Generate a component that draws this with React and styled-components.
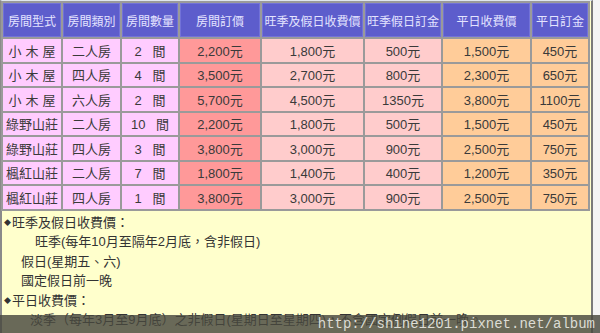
import React from "react";
import styled, { createGlobalStyle } from "styled-components";

const Global = createGlobalStyle`
  html, body { margin: 0; padding: 0; background: #fff; }
  body { font-family: "Liberation Sans", "Noto Sans CJK TC", sans-serif; }
`;

const Stage = styled.div`
  position: relative;
  width: 600px;
  height: 333px;
  overflow: hidden;
  background: #f4f4f4;
`;

const Frame = styled.div`
  width: 589px;
  height: 340px;
  background: #ffffcc;
  border-left: 2px solid #8a8a8a;
  border-right: 2px solid #7a7a7a;
  padding-top: 2px;
  border-top: 1px solid #dfe6ee;
`;

const Table = styled.table`
  width: 589px;
  border-collapse: separate;
  border-spacing: 2px;
  background: #9a9a9a;
  margin-left: -1px;
  margin-top: -2px;
  table-layout: fixed;
`;

const Head = styled.th`
  background: #5d5dcc;
  color: #e4e4ff;
  font-weight: normal;
  font-size: 12px;
  height: 34px;
  padding: 0;
  text-align: center;
  white-space: nowrap;
  overflow: hidden;
  box-shadow: inset 0 0 0 1px #7272d8;
`;

const tones = {
  pink: "#ffccff",
  salmon: "#ff9999",
  rose: "#ffcccc",
  peach: "#ffcc99",
};

const Cell = styled.td`
  background: ${(p) => tones[p.$tone]};
  color: #3a3a3a;
  font-size: 13px;
  height: 22.5px;
  padding: 0;
  text-align: center;
  white-space: nowrap;
  letter-spacing: ${(p) => (p.$spaced ? "4px" : "0")};
  text-indent: ${(p) => (p.$spaced ? "4px" : "0")};
  word-spacing: ${(p) => (p.$wide ? "7px" : "0")};
`;

const Notes = styled.div`
  padding: 2px 0 0 2px;
  color: #333;
  font-size: 13px;
  line-height: 19.5px;
`;

const Line = styled.div`
  padding-left: ${(p) => p.$indent || 0}px;
  white-space: nowrap;
`;

const Bullet = styled.span`
  font-size: 7px;
  vertical-align: 2px;
  margin-right: 1px;
`;

const Watermark = styled.div`
  position: absolute;
  left: 0;
  right: 0;
  bottom: 0;
  height: 18px;
  background: rgba(72, 72, 62, 0.82);
  display: flex;
  align-items: center;
  justify-content: flex-end;
  padding-right: 5px;
`;

const WatermarkText = styled.span`
  font-family: "Liberation Mono", monospace;
  font-size: 14px;
  color: #dcdcd4;
`;

const widths = [58, 57, 56, 80, 101, 76, 87, 56];
const headers = [
  "房間型式",
  "房間類別",
  "房間數量",
  "房間訂價",
  "旺季及假日收費價",
  "旺季假日訂金",
  "平日收費價",
  "平日訂金",
];

const rows = [
  ["小木屋", "二人房", "2 間", "2,200元", "1,800元", "500元", "1,500元", "450元"],
  ["小木屋", "四人房", "4 間", "3,500元", "2,700元", "800元", "2,300元", "650元"],
  ["小木屋", "六人房", "2 間", "5,700元", "4,500元", "1350元", "3,800元", "1100元"],
  ["綠野山莊", "二人房", "10 間", "2,200元", "1,800元", "500元", "1,500元", "450元"],
  ["綠野山莊", "四人房", "3 間", "3,800元", "3,000元", "900元", "2,500元", "750元"],
  ["楓紅山莊", "二人房", "7 間", "1,800元", "1,400元", "400元", "1,200元", "350元"],
  ["楓紅山莊", "四人房", "1 間", "3,800元", "3,000元", "900元", "2,500元", "750元"],
];

const colTones = ["pink", "pink", "pink", "salmon", "rose", "rose", "peach", "peach"];

export default function App() {
  return (
    <>
      <Global />
      <Stage>
        <Frame>
          <Table>
            <colgroup>
              {widths.map((w, i) => (
                <col key={i} style={{ width: w }} />
              ))}
            </colgroup>
            <thead>
              <tr>
                {headers.map((h) => (
                  <Head key={h}>{h}</Head>
                ))}
              </tr>
            </thead>
            <tbody>
              {rows.map((r, ri) => (
                <tr key={ri}>
                  {r.map((c, ci) => (
                    <Cell
                      key={ci}
                      $tone={colTones[ci]}
                      $spaced={c === "小木屋"}
                      $wide={ci === 2}
                    >
                      {c}
                    </Cell>
                  ))}
                </tr>
              ))}
            </tbody>
          </Table>
          <Notes>
            <Line>
              <Bullet>◆</Bullet>旺季及假日收費價：
            </Line>
            <Line $indent={31}>旺季(每年10月至隔年2月底，含非假日)</Line>
            <Line $indent={17}>假日(星期五、六)</Line>
            <Line $indent={17}>國定假日前一晚</Line>
            <Line>
              <Bullet>◆</Bullet>平日收費價：
            </Line>
            <Line $indent={26}>
              淡季（每年3月至9月底）之非假日(星期日至星期四)，不含國定例假日前一晚。
            </Line>
          </Notes>
        </Frame>
        <Watermark>
          <WatermarkText>http://shine1201.pixnet.net/album</WatermarkText>
        </Watermark>
      </Stage>
    </>
  );
}
